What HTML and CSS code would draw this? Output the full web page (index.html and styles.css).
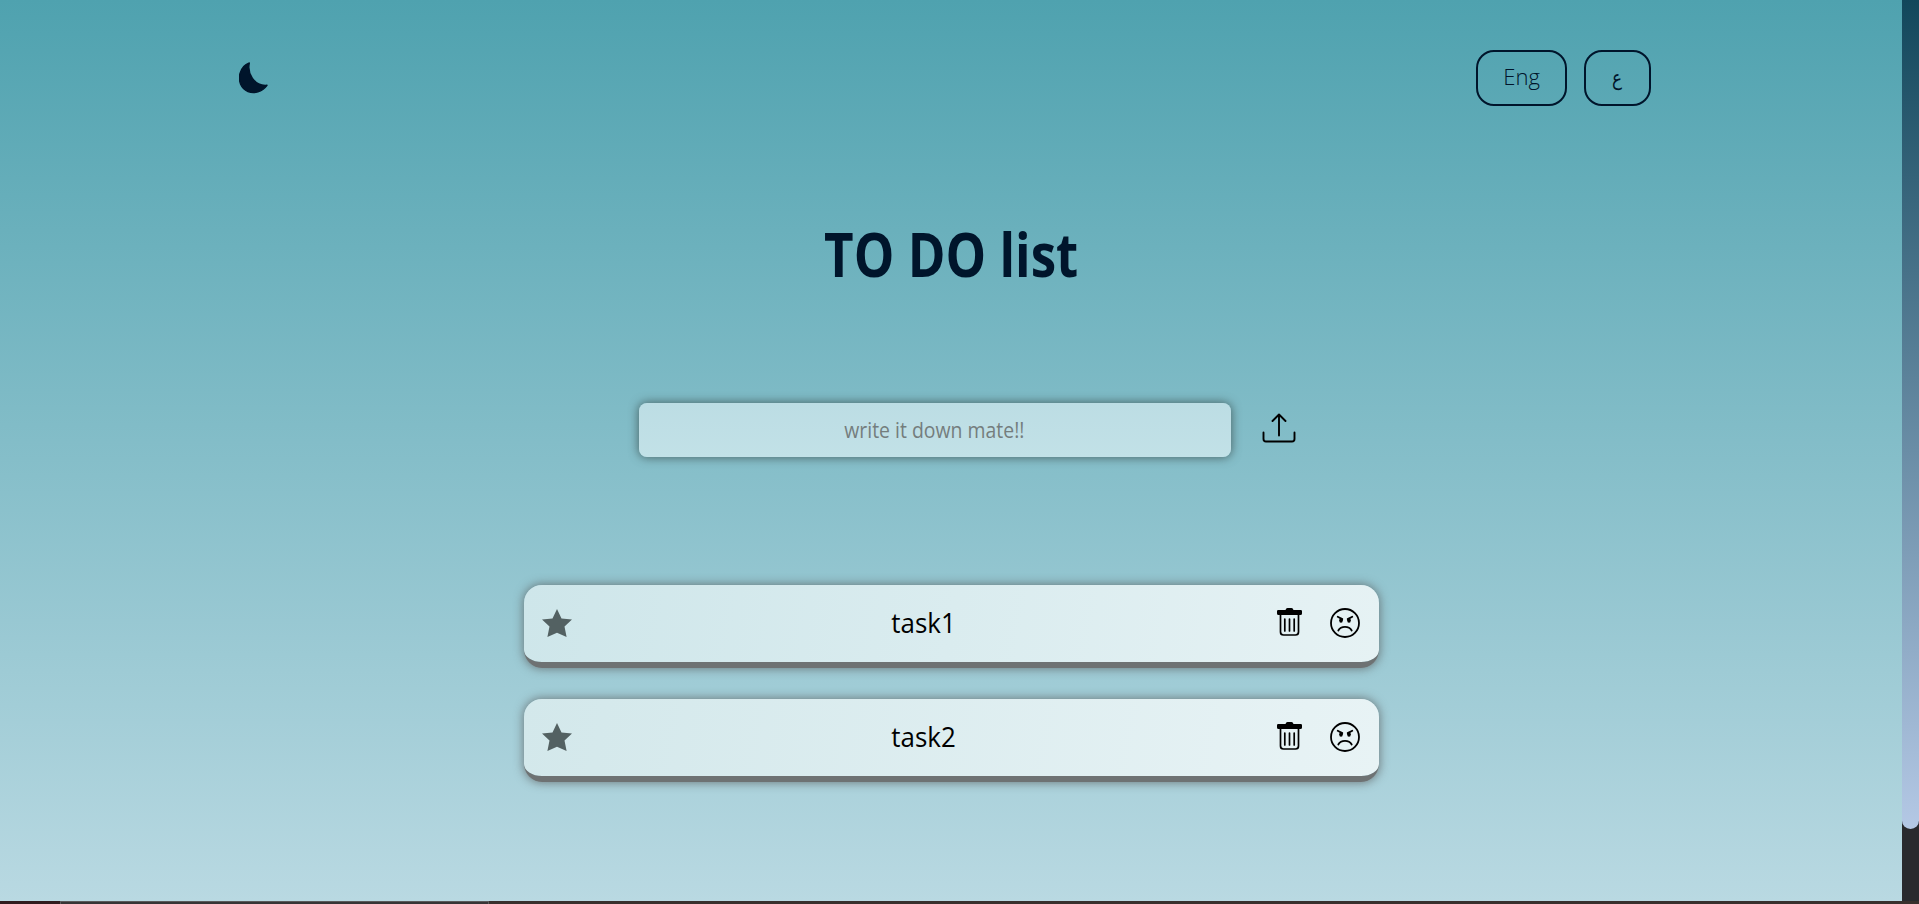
FILE: index.html
```html
<!DOCTYPE html>
<html lang="en">
<head>
<meta charset="utf-8">
<title>TO DO list</title>
<link rel="stylesheet" href="styles.css">
</head>
<body>
<div class="window">
  <div class="viewport">
    <main class="page">
      <header class="bar">
        <svg class="moon" viewBox="0 0 30 32"><path fill="#00152b" stroke="#00152b" stroke-width="1.4" stroke-linejoin="round" d="M10.300 1C8 11 15 24.500 28 23.300C23 30 15 32 9 29.500C2 26.500-1 19 1 11.500C2.500 6 6 2.500 10.300 1Z"/></svg>
        <div class="langs">
          <button class="lang lang-en"><span>Eng</span></button>
          <button class="lang lang-ar"><span>ع</span></button>
        </div>
      </header>
      <h1 class="title"><span>TO DO list</span></h1>
      <form class="entry">
        <div class="field"><span>write it down mate!!</span></div>
        <svg class="upload" viewBox="0 0 34 30" fill="none" stroke="#000" stroke-width="1.900" stroke-linecap="round" stroke-linejoin="round"><path d="M1.500 19.500V26Q1.500 28.500 4 28.500H30Q32.500 28.500 32.500 26V19.500M17 22.500V1.500M10.500 8L17 1.500L23.500 8"/></svg>
      </form>
      <ul class="tasks">
        <li class="task">
          <svg class="star" viewBox="0 0 30 28"><path d="M15 0L19.500 9.500L30 10.600L22.500 17.500L24.600 28L15 23.700L5.400 28L7.500 17.500L0 10.600L10.500 9.500Z"/></svg>
          <span class="name"><span>task1</span></span>
          <svg class="trash" viewBox="0 0 25 28"><path d="M0 3.200Q0 2 1.200 2H8.500Q9 0 10.500 0H14.500Q16 0 16.500 2H23.800Q25 2 25 3.200V5.500Q25 7 23.500 7H1.500Q0 7 0 5.500Z"/><path fill="none" stroke="#000" stroke-width="1.700" stroke-linecap="round" d="M3.500 6.500V24Q3.500 27 6.500 27H18.500Q21.500 27 21.500 24V6.500M7.800 11V23M12.500 11V23M17.200 11V23"/></svg>
          <svg class="face" viewBox="0 0 30 30"><g fill="none" stroke="#000" stroke-width="1.800" stroke-linecap="round"><circle cx="15" cy="15" r="14"/><path d="M8.300 22.500C11 17.700 19 17.700 21.700 22.500"/><path d="M7.700 8.800L12.300 11.100M22.300 8.800L17.700 11.100"/></g><ellipse cx="11" cy="12.200" rx="1.800" ry="2.500"/><ellipse cx="19" cy="12.200" rx="1.800" ry="2.500"/></svg>
        </li>
        <li class="task">
          <svg class="star" viewBox="0 0 30 28"><path d="M15 0L19.500 9.500L30 10.600L22.500 17.500L24.600 28L15 23.700L5.400 28L7.500 17.500L0 10.600L10.500 9.500Z"/></svg>
          <span class="name"><span>task2</span></span>
          <svg class="trash" viewBox="0 0 25 28"><path d="M0 3.200Q0 2 1.200 2H8.500Q9 0 10.500 0H14.500Q16 0 16.500 2H23.800Q25 2 25 3.200V5.500Q25 7 23.500 7H1.500Q0 7 0 5.500Z"/><path fill="none" stroke="#000" stroke-width="1.700" stroke-linecap="round" d="M3.500 6.500V24Q3.500 27 6.500 27H18.500Q21.500 27 21.500 24V6.500M7.800 11V23M12.500 11V23M17.200 11V23"/></svg>
          <svg class="face" viewBox="0 0 30 30"><g fill="none" stroke="#000" stroke-width="1.800" stroke-linecap="round"><circle cx="15" cy="15" r="14"/><path d="M8.300 22.500C11 17.700 19 17.700 21.700 22.500"/><path d="M7.700 8.800L12.300 11.100M22.300 8.800L17.700 11.100"/></g><ellipse cx="11" cy="12.200" rx="1.800" ry="2.500"/><ellipse cx="19" cy="12.200" rx="1.800" ry="2.500"/></svg>
        </li>
      </ul>
    </main>
    <div class="track"><div class="thumb"></div></div>
  </div>
  <div class="strip"><i class="strip-a"></i><i class="strip-b"></i><i class="strip-c"></i></div>
</div>
</body>
</html>
```
FILE: styles.css
```css
* { box-sizing: border-box; }
body { margin: 0; overflow: hidden; font-family: "Open Sans", "Noto Sans", sans-serif; color: #000; }
svg { display: block; flex: none; }
.window { height: 904px; display: flex; flex-direction: column; }
.viewport { height: 901px; display: flex; }
.page { flex: 1; background: linear-gradient(#4fa2af, #b9d9e2); display: flex; flex-direction: column; align-items: center; }
.bar { width: 1424px; height: 56px; margin-top: 50px; padding-right: 12px; display: flex; justify-content: space-between; align-items: center; }
.moon { width: 30px; height: 32px; margin-bottom: 1px; }
.langs { display: flex; gap: 17px; }
.lang { height: 56px; padding: 0; border: 2px solid #00152b; border-radius: 18px; background: none; color: #00152b; font: 300 22.500px "Open Sans", "DejaVu Sans", sans-serif; }
.lang span { display: inline-block; }
.lang-en { width: 91px; padding-bottom: 3px; }
.lang-en span { transform: scaleX(.98); }
.lang-ar { width: 67px; font-family: "DejaVu Sans", sans-serif; font-size: 21px; }
.lang-ar span { transform: scaleX(.8); }
.title { margin: 104px 0 0; height: 88px; line-height: 88px; font-size: 60px; font-weight: 700; color: #00152b; white-space: nowrap; }
.title span { display: inline-block; transform: scaleX(.852); }
.entry { width: 657px; height: 54px; margin: 105px 0 0 32px; display: flex; align-items: center; gap: 31px; }
.field { width: 592px; height: 54px; flex: none; border-radius: 8px; background: linear-gradient(#bcdde4, #c2e1e7); box-shadow: 0 0 10px 1px rgba(60,80,80,.75); color: #747d7d; font-size: 21px; line-height: 54px; text-align: center; }
.field span { display: inline-block; transform: scaleX(.925); }
.upload { width: 34px; height: 30px; margin-bottom: 4px; }
.tasks { list-style: none; margin: 128px 0 0; padding: 0; display: flex; flex-direction: column; gap: 31px; }
.task { width: 855px; height: 83px; padding: 0 19px 2px 18px; display: flex; align-items: center; border-bottom: 6px solid #6e7273; border-radius: 18px; background: linear-gradient(100deg, #cee6ea, #e6f2f4) padding-box; box-shadow: 0 0 10px 1px rgba(85,85,85,.65); }
.task + .task { background: linear-gradient(100deg, #d3e8eb, #e8f3f5) padding-box; }
.star { width: 30px; height: 28px; fill: #536162; }
.name { flex: 1; text-align: center; font-size: 27px; line-height: 36px; padding-right: 1px; }
.name span { display: inline-block; transform: scaleX(.96); }
.trash { width: 25px; height: 28px; margin: 0 28px 2px 0; }
.face { width: 30px; height: 30px; }
.track { width: 17px; background: #292a2e; }
.thumb { height: 829px; border-radius: 0 0 9px 9px; background: linear-gradient(#12475b, #b4c8e5); }
.strip { height: 3px; display: flex; }
.strip-a { width: 60px; background: #301b1e; }
.strip-b { width: 429px; background: #373536; border: solid #5b5a5b; border-width: 1px 1px 0; }
.strip-c { flex: 1; background: #38302d; }
```
